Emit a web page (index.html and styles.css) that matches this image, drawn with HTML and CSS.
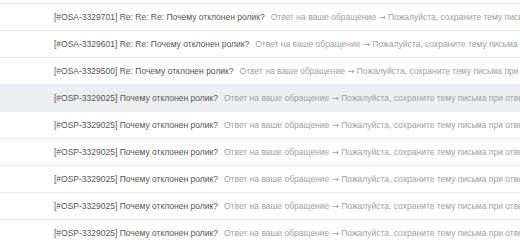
FILE: index.html
```html
<!doctype html>
<html>
	<head>
		<meta charset="utf-8">
		<title>Inbox</title>
		<link rel="stylesheet" href="styles.css">
	</head>
	<body>
		<ul class="mail-list">
			<li class="mail"><span class="subject">[#OSA-3329701] Re: Re: Re: Почему отклонен ролик?</span><span class="preview">Ответ на ваше обращение <span class="arrow">→</span> Пожалуйста, сохраните тему письма при ответе</span></li>
			<li class="mail"><span class="subject">[#OSA-3329601] Re: Re: Почему отклонен ролик?</span><span class="preview">Ответ на ваше обращение <span class="arrow">→</span> Пожалуйста, сохраните тему письма при ответе</span></li>
			<li class="mail"><span class="subject">[#OSA-3329500] Re: Почему отклонен ролик?</span><span class="preview">Ответ на ваше обращение <span class="arrow">→</span> Пожалуйста, сохраните тему письма при ответе</span></li>
			<li class="mail active"><span class="subject">[#OSP-3329025] Почему отклонен ролик?</span><span class="preview">Ответ на ваше обращение <span class="arrow">→</span> Пожалуйста, сохраните тему письма при ответе</span></li>
			<li class="mail"><span class="subject">[#OSP-3329025] Почему отклонен ролик?</span><span class="preview">Ответ на ваше обращение <span class="arrow">→</span> Пожалуйста, сохраните тему письма при ответе</span></li>
			<li class="mail"><span class="subject">[#OSP-3329025] Почему отклонен ролик?</span><span class="preview">Ответ на ваше обращение <span class="arrow">→</span> Пожалуйста, сохраните тему письма при ответе</span></li>
			<li class="mail"><span class="subject">[#OSP-3329025] Почему отклонен ролик?</span><span class="preview">Ответ на ваше обращение <span class="arrow">→</span> Пожалуйста, сохраните тему письма при ответе</span></li>
			<li class="mail"><span class="subject">[#OSP-3329025] Почему отклонен ролик?</span><span class="preview">Ответ на ваше обращение <span class="arrow">→</span> Пожалуйста, сохраните тему письма при ответе</span></li>
			<li class="mail"><span class="subject">[#OSP-3329025] Почему отклонен ролик?</span><span class="preview">Ответ на ваше обращение <span class="arrow">→</span> Пожалуйста, сохраните тему письма при ответе</span></li>
		</ul>
	</body>
</html>
```

FILE: styles.css
```css
* {
	margin: 0;
	padding: 0;
	box-sizing: border-box;
}
body {
	background-color: #fff;
	font-family: "Liberation Sans", Arial, sans-serif;
	overflow: hidden;
}
.mail-list {
	list-style: none;
	padding-top: 3px;
}
.mail {
	display: flex;
	align-items: center;
	gap: 6px;
	height: 27px;
	padding-left: 54px;
	border-top: 1px solid #ececec;
	font-size: 8.5px;
	white-space: nowrap;
	overflow: hidden;
}
.mail.active {
	background-color: #edeef1;
}
.subject {
	color: #555;
	flex-shrink: 0;
}
.preview {
	color: #a0a0a0;
}
.arrow {
	font-family: "DejaVu Sans", sans-serif;
}
```
